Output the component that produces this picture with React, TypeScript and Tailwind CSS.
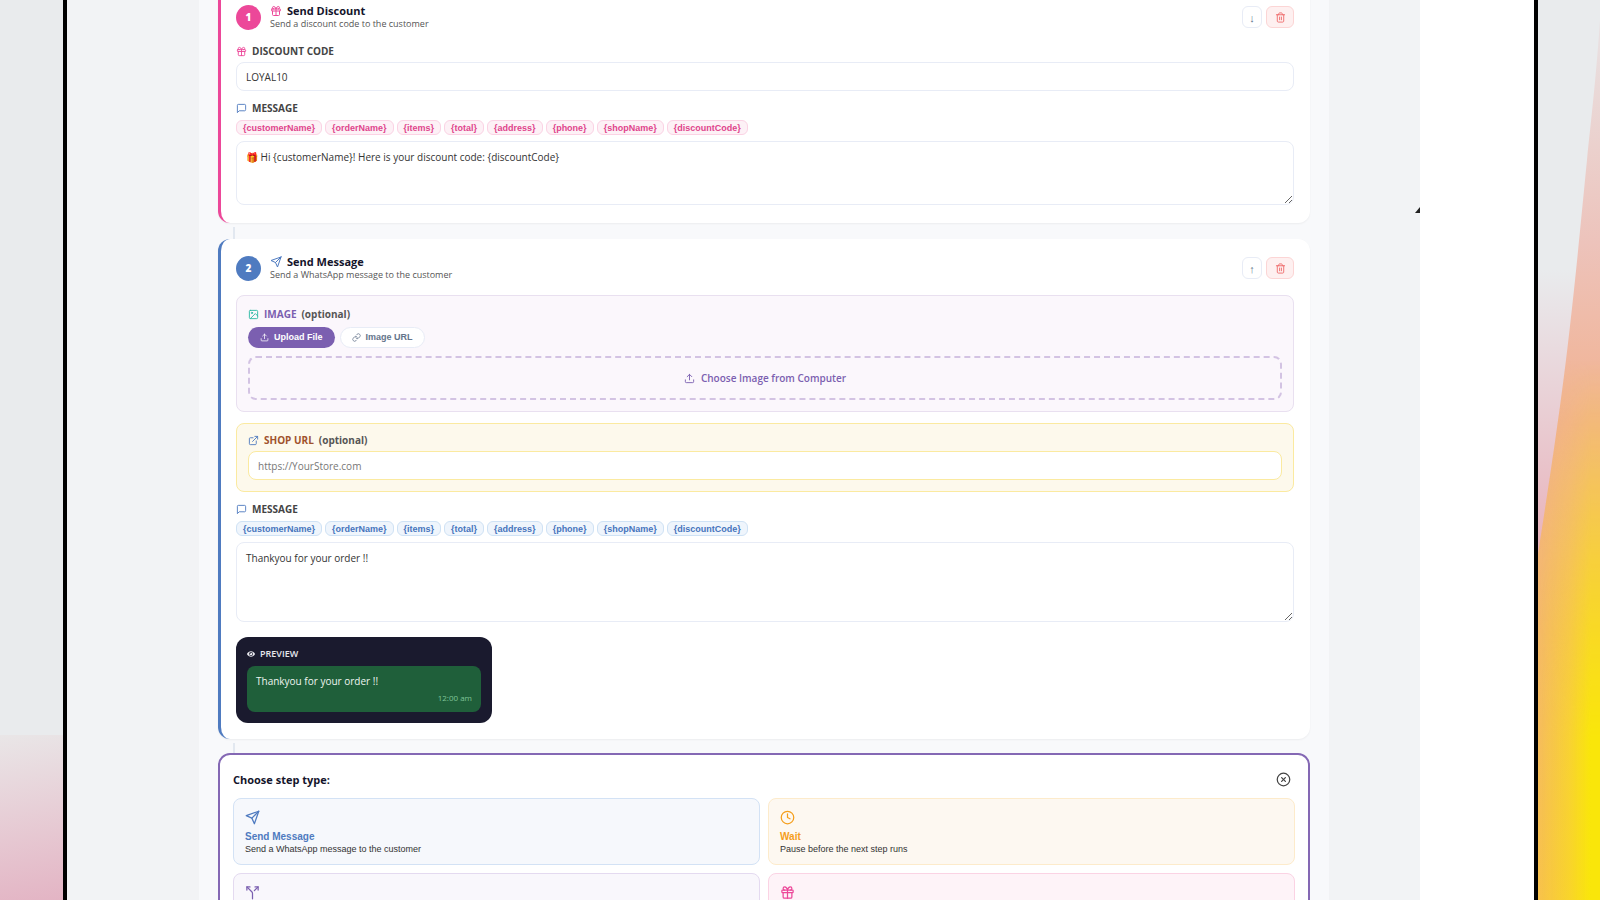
import {ReactNode} from "react";
import {FiExternalLink, FiImage, FiLink, FiMessageSquare, FiSend, FiUpload, FiClock, FiXCircle} from "react-icons/fi";
import {FaEye} from "react-icons/fa";
import {LuGift, LuSplit, LuTrash2} from "react-icons/lu";

const variables = [
    "{customerName}",
    "{orderName}",
    "{items}",
    "{total}",
    "{address}",
    "{phone}",
    "{shopName}",
    "{discountCode}",
];

interface StepProps {
    number: number;
    title: string;
    text: string;
    icon: ReactNode;
    move: "up" | "down";
    border: string;
    badge: string;
    children: ReactNode;
}

function StepCard({number, title, text, icon, move, border, badge, children}: StepProps) {
    return (
        <section className={`rounded-xl border-l-3 bg-white pt-4 pr-4 pb-4 pl-[15px] shadow-xs ${border}`}>
            <header className="flex items-center gap-[9px]">
                <span className={`flex size-[25px] items-center justify-center rounded-full text-[10px] font-extrabold text-white ${badge}`}>
                    {number}
                </span>
                <div className="flex-1">
                    <h3 className="flex items-center gap-[5px] text-[11px] leading-[13px] font-bold text-[#14142b]">
                        {icon}
                        {title}
                    </h3>
                    <p className="text-[9px] leading-[13px] text-[#555]">{text}</p>
                </div>
                <div className="flex gap-1">
                    <button
                        aria-label={`Move ${move}`}
                        className="h-[22px] w-5 rounded-md border border-[#e8ecf6] bg-white text-[11px] leading-none text-[#64748b]"
                    >
                        {move === "up" ? "↑" : "↓"}
                    </button>
                    <button
                        aria-label="Delete step"
                        className="flex h-[22px] w-7 items-center justify-center rounded-md border border-[#fcd5d5] bg-[#fef0f0] text-[#ef6b6b]"
                    >
                        <LuTrash2 size={11}/>
                    </button>
                </div>
            </header>
            {children}
        </section>
    );
}

function Chips({color}: { color: string }) {
    return (
        <div className="mt-[5px] flex gap-[3px] font-['Liberation_Sans',sans-serif]">
            {variables.map((name) => (
                <button key={name} className={`h-[15px] rounded-md border px-1.5 text-[9px] leading-[12px] font-bold ${color}`}>
                    {name}
                </button>
            ))}
        </div>
    );
}

interface OptionProps {
    title: string;
    text: string;
    icon: ReactNode;
    color: string;
}

function StepOption({title, text, icon, color}: OptionProps) {
    return (
        <button className={`flex h-[67px] flex-col items-start rounded-lg border px-[11px] pt-[11px] font-['Liberation_Sans',sans-serif] ${color}`}>
            {icon}
            <span className="mt-[5px] text-[10px] leading-[13px] font-bold">{title}</span>
            <span className="text-[9px] leading-[13px] text-[#333]">{text}</span>
        </button>
    );
}

const labelStyle = "flex items-center gap-[5px] text-[10px] leading-[14px] font-bold";
const fieldStyle = "block w-full rounded-lg border bg-white px-[9px] text-[10px] text-[#333]";

export default function App() {
    return (
        <div className="flex h-screen overflow-hidden bg-[#e9ebed] font-['Open_Sans',sans-serif]">
            <div className="flex w-[63px] shrink-0 flex-col justify-end">
                <div className="h-[165px] bg-linear-170 from-[#e9e6e7] to-[#e3b4c4]"/>
            </div>

            <main className="flex min-w-0 flex-1 border-x-4 border-black bg-white">
                <div className="relative flex-1 bg-[#f2f3f5] pr-[91px] pl-[132px]">
                    <div className="flex h-full flex-col bg-[#f8f9fb] px-[19px]">
                        <div className="-mt-3">
                            <StepCard
                                number={1}
                                title="Send Discount"
                                text="Send a discount code to the customer"
                                icon={<LuGift size={12} className="text-[#ec4899]"/>}
                                move="down"
                                border="border-[#ec4899]"
                                badge="bg-[#ec4899]"
                            >
                                <label htmlFor="code" className={`${labelStyle} mt-3.5 text-[#444]`}>
                                    <LuGift size={11} className="text-[#ec4899]"/>
                                    DISCOUNT CODE
                                </label>
                                <input id="code" defaultValue="LOYAL10" className={`${fieldStyle} mt-1 h-[29px] border-[#e8ecf6]`}/>
                                <label htmlFor="discount-message" className={`${labelStyle} mt-2.5 text-[#444]`}>
                                    <FiMessageSquare size={11} className="text-[#4f7bc0]"/>
                                    MESSAGE
                                </label>
                                <Chips color="border-[#fbd3e4] bg-[#fdf1f6] text-[#e0448c]"/>
                                <textarea
                                    id="discount-message"
                                    defaultValue="🎁 Hi {customerName}! Here is your discount code: {discountCode}"
                                    className={`${fieldStyle} mt-1.5 mb-0.5 h-16 border-[#e8ecf6] py-2`}
                                />
                            </StepCard>

                            <div className="mt-1 ml-[15px] h-3 w-0.5 bg-[#e2e8f0]"/>

                            <StepCard
                                number={2}
                                title="Send Message"
                                text="Send a WhatsApp message to the customer"
                                icon={<FiSend size={12} className="text-[#4f7bc0]"/>}
                                move="up"
                                border="border-[#4f7bc0]"
                                badge="bg-[#4f7bc0]"
                            >
                                <div className="mt-3.5 rounded-lg border border-[#e9e0f0] bg-[#fbf7fc] px-[11px] py-[11px]">
                                    <label htmlFor="image-picker" className={`${labelStyle} text-[#7b5fb0]`}>
                                        <FiImage size={11} className="text-[#2bb8a3]"/>
                                        IMAGE <span className="text-[#555]">(optional)</span>
                                    </label>
                                    <div className="mt-1.5 flex gap-[5px] font-['Liberation_Sans',sans-serif] text-[9px] font-bold">
                                        <button className="flex h-[21px] items-center gap-[5px] rounded-full bg-[#7b5fb0] px-3 text-white">
                                            <FiUpload size={9}/>
                                            Upload File
                                        </button>
                                        <button className="flex h-[21px] items-center gap-[5px] rounded-full border border-[#e8ecf6] bg-white px-[11px] text-[#64748b]">
                                            <FiLink size={9}/>
                                            Image URL
                                        </button>
                                    </div>
                                    <button
                                        id="image-picker"
                                        className="mt-2 flex h-11 w-full items-center justify-center gap-1.5 rounded-lg border-2 border-dashed border-[#d3c3e3] text-[10px] font-semibold text-[#7b5fb0]"
                                    >
                                        <FiUpload size={11}/>
                                        Choose Image from Computer
                                    </button>
                                </div>

                                <div className="mt-[11px] rounded-lg border border-[#fbeaa0] bg-[#fdf9ec] px-[11px] pt-[9px] pb-[11px]">
                                    <label htmlFor="shop-url" className={`${labelStyle} text-[#a0522d]`}>
                                        <FiExternalLink size={11} className="text-[#4f7bc0]"/>
                                        SHOP URL <span className="text-[#555]">(optional)</span>
                                    </label>
                                    <input
                                        id="shop-url"
                                        placeholder="https://YourStore.com"
                                        className={`${fieldStyle} mt-1 h-[29px] border-[#fbeaa0] placeholder:text-[#777]`}
                                    />
                                </div>

                                <label htmlFor="order-message" className={`${labelStyle} mt-2.5 text-[#444]`}>
                                    <FiMessageSquare size={11} className="text-[#4f7bc0]"/>
                                    MESSAGE
                                </label>
                                <Chips color="border-[#cfe2f5] bg-[#eff5fc] text-[#4674bd]"/>
                                <textarea
                                    id="order-message"
                                    defaultValue="Thankyou for your order !!"
                                    className={`${fieldStyle} mt-1.5 h-20 border-[#e8ecf6] py-2`}
                                />

                                <div className="mt-[15px] w-64 rounded-xl bg-[#1a1a2e] px-[11px] pt-2.5 pb-[11px]">
                                    <p className="flex items-center gap-[5px] text-[9px] leading-[14px] font-semibold text-[#e8e8ee]">
                                        <FaEye size={8}/>
                                        PREVIEW
                                    </p>
                                    <div className="mt-[5px] rounded-lg bg-[#1f5f3a] px-[9px] py-2">
                                        <p className="text-[10px] leading-[15px] text-[#eef5f0]">Thankyou for your order !!</p>
                                        <p className="mt-[3px] text-right text-[8px] leading-[12px] text-[#7fc498]">12:00 am</p>
                                    </div>
                                </div>
                            </StepCard>

                            <div className="mt-1 ml-[15px] h-2.5 w-0.5 bg-[#e2e8f0]"/>

                            <section className="rounded-xl border-2 border-[#8468b4] bg-white p-[13px]">
                                <header className="mt-1 flex items-center justify-between pr-1">
                                    <h3 className="text-[11px] leading-[14px] font-bold text-[#14142b]">Choose step type:</h3>
                                    <button aria-label="Close" className="text-[#444]">
                                        <FiXCircle size={15}/>
                                    </button>
                                </header>
                                <div className="mt-[11px] grid grid-cols-2 gap-2">
                                    <StepOption
                                        title="Send Message"
                                        text="Send a WhatsApp message to the customer"
                                        icon={<FiSend size={15}/>}
                                        color="border-[#d3e2f5] bg-[#f6f8fc] text-[#4f7bc0]"
                                    />
                                    <StepOption
                                        title="Wait"
                                        text="Pause before the next step runs"
                                        icon={<FiClock size={15}/>}
                                        color="border-[#fdebcb] bg-[#fdf8f1] text-[#f59e1b]"
                                    />
                                    <StepOption
                                        title="Condition"
                                        text="Split the flow on a rule"
                                        icon={<LuSplit size={15}/>}
                                        color="border-[#e4daf0] bg-[#f9f7fc] text-[#7b5fb0]"
                                    />
                                    <StepOption
                                        title="Send Discount"
                                        text="Send a discount code to the customer"
                                        icon={<LuGift size={15}/>}
                                        color="border-[#fbd3e4] bg-[#fef3f8] text-[#ec4899]"
                                    />
                                </div>
                            </section>
                        </div>
                    </div>
                    {/* Window resize grip */}
                    <svg className="absolute top-[207px] right-0" width="5" height="6" viewBox="0 0 5 6">
                        <path d="M5 0V6H0Z" fill="#222"/>
                    </svg>
                </div>
                <div className="w-[114px] shrink-0"/>
            </main>

            <svg className="h-full w-[62px] shrink-0" viewBox="0 0 62 900" preserveAspectRatio="none" aria-hidden="true">
                <defs>
                    <linearGradient id="haze" x1="0" y1="0" x2="0" y2="1">
                        <stop offset="0.3" stopColor="#e9ebed"/>
                        <stop offset="0.6" stopColor="#e9b4bd"/>
                    </linearGradient>
                    <linearGradient id="glow" x1="0" y1="0" x2="0" y2="900" gradientUnits="userSpaceOnUse">
                        <stop offset="0.05" stopColor="#e9dfe0"/>
                        <stop offset="0.27" stopColor="#edc3bb"/>
                        <stop offset="0.47" stopColor="#f2b18f"/>
                        <stop offset="0.7" stopColor="#f5b968"/>
                        <stop offset="1" stopColor="#f8c24c"/>
                    </linearGradient>
                    <linearGradient id="yellow" x1="0" y1="0" x2="62" y2="0" gradientUnits="userSpaceOnUse">
                        <stop offset="0" stopColor="#f9e60a" stopOpacity="0"/>
                        <stop offset="0.5" stopColor="#f9e60a" stopOpacity="0.5"/>
                        <stop offset="0.85" stopColor="#f9e60a"/>
                    </linearGradient>
                    <linearGradient id="fade" x1="0" y1="0" x2="0" y2="1">
                        <stop offset="0.4" stopColor="#000"/>
                        <stop offset="0.82" stopColor="#fff"/>
                    </linearGradient>
                    <mask id="rise">
                        <rect width="62" height="900" fill="url(#fade)"/>
                    </mask>
                </defs>
                <rect width="62" height="900" fill="url(#haze)"/>
                <path d="M62 20C58 80 53 120 49 160C43 220 34 320 22 406C14 465 6 515 0 554V900H62Z" fill="url(#glow)"/>
                <path d="M62 20C58 80 53 120 49 160C43 220 34 320 22 406C14 465 6 515 0 554V900H62Z" fill="url(#yellow)" mask="url(#rise)"/>
            </svg>
        </div>
    );
}
